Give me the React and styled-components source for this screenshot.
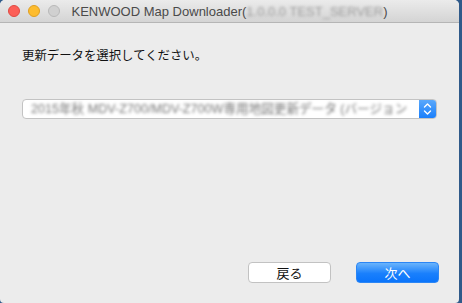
import React from "react";
import styled, { createGlobalStyle } from "styled-components";

const Global = createGlobalStyle`
  html, body { margin: 0; padding: 0; }
  body {
    background: #2f5a8a;
    width: 462px;
    height: 303px;
    overflow: hidden;
    font-family: "Liberation Sans", "Noto Sans CJK JP", sans-serif;
  }
`;

const Window = styled.div`
  width: 459px;
  height: 303px;
  background: #ececec;
  border-radius: 5px 5px 4px 4px;
  display: flex;
  flex-direction: column;
  overflow: hidden;
  box-sizing: border-box;
`;

const TitleBar = styled.div`
  height: 22px;
  flex: none;
  position: relative;
  display: flex;
  align-items: center;
  justify-content: center;
  background: linear-gradient(#ebebeb, #d4d4d4);
  border-bottom: 1px solid #b5b5b5;
`;

const Lights = styled.div`
  position: absolute;
  left: 8px;
  top: 5px;
  display: flex;
  gap: 8px;
`;

const Light = styled.span`
  width: 12px;
  height: 12px;
  border-radius: 50%;
  box-sizing: border-box;
  background: ${(p) => p.$c};
  border: 0.5px solid ${(p) => p.$b};
`;

const Title = styled.div`
  font-size: 13px;
  color: #4a4a4a;
  display: flex;
  align-items: center;
  white-space: nowrap;
`;

const Blur = styled.span`
  filter: blur(${(p) => p.$r || "1.8px"});
  color: ${(p) => p.$c || "#9a9a9a"};
`;

const Content = styled.div`
  flex: 1;
  display: flex;
  flex-direction: column;
  padding: 23px 22px 20px 22px;
`;

const Label = styled.div`
  font-size: 12.4px;
  line-height: 18px;
  color: #111;
  font-family: "Noto Sans CJK JP", sans-serif;
`;

const Select = styled.div`
  margin-top: 35px;
  height: 20px;
  width: 415px;
  box-sizing: border-box;
  display: flex;
  background: #fff;
  border: 1px solid #c3c3c3;
  border-radius: 4px;
  overflow: hidden;
`;

const SelectText = styled.div`
  flex: 1;
  padding-left: 8px;
  font-size: 12.6px;
  line-height: 18px;
  white-space: nowrap;
  overflow: hidden;
  font-family: "Liberation Sans", "Noto Sans CJK JP", sans-serif;
`;

const Stepper = styled.div`
  width: 17px;
  flex: none;
  background: linear-gradient(#5aa8fb, #1a7ffb);
  display: flex;
  align-items: center;
  justify-content: center;
`;

const Spacer = styled.div`
  flex: 1;
`;

const Buttons = styled.div`
  display: flex;
  justify-content: flex-end;
  gap: 25px;
  margin-right: -2px;
`;

const Button = styled.div`
  width: 83px;
  height: 21px;
  box-sizing: border-box;
  border-radius: 4px;
  display: flex;
  align-items: center;
  justify-content: center;
  font-size: 13px;
  font-family: "Noto Sans CJK JP", sans-serif;
  color: ${(p) => (p.$primary ? "#fff" : "#111")};
  background: ${(p) =>
    p.$primary ? "linear-gradient(#6ab4fc, #1a80fc 55%, #0a74fb)" : "#fff"};
  border: 1px solid ${(p) => (p.$primary ? "#2b86f5" : "#c2c2c2")};
`;

export default function App() {
  return (
    <>
      <Global />
      <Window>
        <TitleBar>
          <Lights>
            <Light $c="#fc5f57" $b="#de4a42" />
            <Light $c="#fdbc2e" $b="#de9f22" />
            <Light $c="#d0d0d0" $b="#b8b8b8" />
          </Lights>
          <Title>
            KENWOOD Map Downloader(<Blur>1.0.0.0 TEST_SERVER</Blur>)
          </Title>
        </TitleBar>
        <Content>
          <Label>更新データを選択してください。</Label>
          <Select>
            <SelectText>
              <Blur $c="#777" $r="1.6px">2015年秋 MDV-Z700/MDV-Z700W専用地図更新データ (バージョン</Blur>
            </SelectText>
            <Stepper>
              <svg width="9" height="14" viewBox="0 0 9 14" fill="none" stroke="#fff" strokeWidth="1.4" strokeLinecap="round" strokeLinejoin="round">
                <path d="M1.5 5 L4.5 2 L7.5 5" />
                <path d="M1.5 9 L4.5 12 L7.5 9" />
              </svg>
            </Stepper>
          </Select>
          <Spacer />
          <Buttons>
            <Button>戻る</Button>
            <Button $primary>次へ</Button>
          </Buttons>
        </Content>
      </Window>
    </>
  );
}
